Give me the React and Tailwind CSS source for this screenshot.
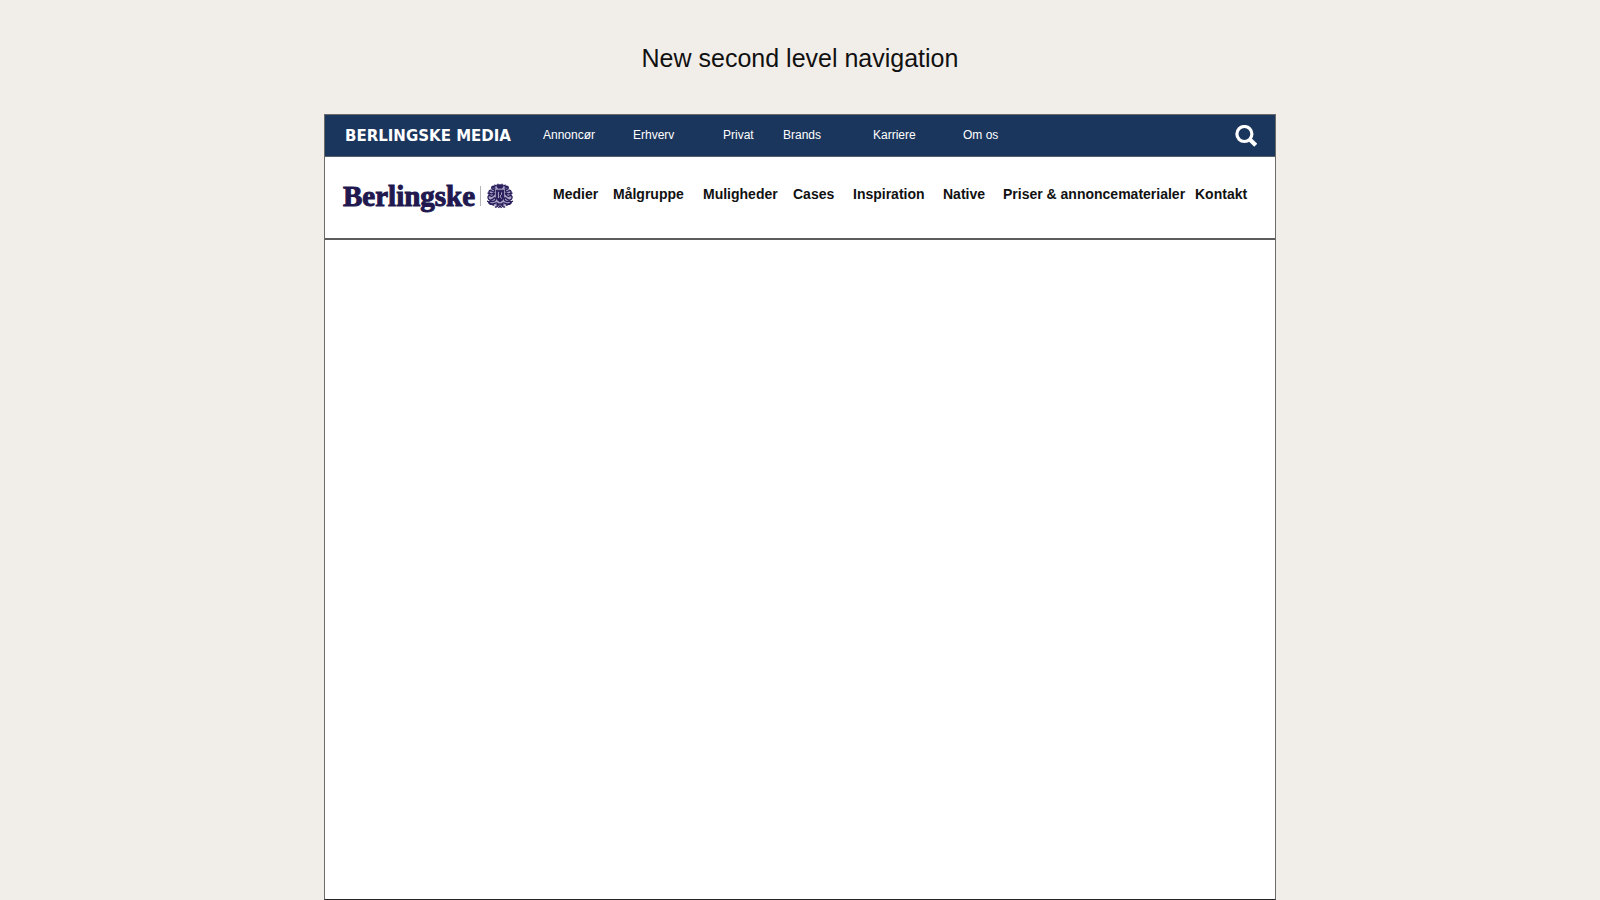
const topLinks = [
  { label: 'Annoncør', width: 'w-[90px]' },
  { label: 'Erhverv', width: 'w-[90px]' },
  { label: 'Privat', width: 'w-[60px]' },
  { label: 'Brands', width: 'w-[90px]' },
  { label: 'Karriere', width: 'w-[90px]' },
  { label: 'Om os', width: 'w-[90px]' },
];

const sectionLinks = [
  { label: 'Medier', width: 'w-[60px]' },
  { label: 'Målgruppe', width: 'w-[90px]' },
  { label: 'Muligheder', width: 'w-[90px]' },
  { label: 'Cases', width: 'w-[60px]' },
  { label: 'Inspiration', width: 'w-[90px]' },
  { label: 'Native', width: 'w-[60px]' },
  { label: 'Priser & annoncematerialer', width: 'w-48' },
  { label: 'Kontakt', width: 'w-[60px]' },
];

function SearchIcon() {
  return (
    <svg className="h-[22px] w-[22px]" viewBox="0 0 22 22" fill="none" stroke="#fff" aria-hidden="true">
      <circle cx="9.4" cy="9" r="7.500" strokeWidth="3.2" />
      <path d="M14.600 14.200 20.700 20.200" strokeWidth="4.200" />
    </svg>
  );
}

function Crest() {
  return (
    <svg className="h-[26px] w-7" viewBox="0 0 27 25" fill="none" stroke="#2a1f5c" aria-hidden="true">
      <ellipse cx="13.5" cy="12" rx="11.5" ry="10.5" fill="#aaa5c5" stroke="none" />
      <path d="M10.5 3c-1-2 1.200-2.500 3-1.200 1.800-1.300 4-.8 3 1.200l-1 2h-4z" fill="#2a1f5c" strokeWidth=".6" />
      <path d="M10 7h7v7c0 2-2 3-3.500 4-1.500-1-3.500-2-3.500-4z" fill="#2a1f5c" strokeWidth="1" />
      <path d="M12 8.500v6M15 9v2l-1.500 1.500L15 15" stroke="#c9c5dd" strokeWidth=".8" />
      <path
        d="M9 4C6.500 2 4.500 4 6 5.500S9 6 8 8 4 5.500 3 8s2.500 3 4.500 2-1 4-3 2.500S1 13.500 2.500 15.500s4 .5 5.500-1 2 2 0 3-4-.8-5 .7 1.500 3 4 2 3.500-2 4.500-.2-1 3.500-3 3"
        strokeWidth="1.300"
      />
      <path
        d="M18 4c2.500-2 4.500 0 3 1.500S18 6 19 8s4-2.500 5 0-2.500 3-4.500 2 1 4 3 2.500 3.500 1 2 3-4 .5-5.500-1-2 2 0 3 4-.8 5 .7-1.500 3-4 2-3.500-2-4.500-.2 1 3.500 3 3"
        strokeWidth="1.300"
      />
      <path d="M1 17.500c2 .5 4 3.500 7 4M26 17.500c-2 .5-4 3.500-7 4M10 21.500c2-1.500 5-1.500 7 0M12 24l1.500-2 1.500 2" strokeWidth="1.300" />
      <path d="M6 3.500l3 2M21 3.500l-3 2M1.500 9.500l2.500 1.500M25.500 9.500l-2.500 1.500M8 1.800l2 1M19 1.800l-2 1" strokeWidth="1.200" />
    </svg>
  );
}

export default function App() {
  return (
    <div className="flex min-h-screen flex-col items-center bg-[#f1eee9] font-['Liberation_Sans',Arial,sans-serif]">
      <h1 className="pt-10 pb-[38px] text-[25px] leading-9 text-[#111]">New second level navigation</h1>
      <div className="flex w-full max-w-[952px] grow flex-col border border-[#6b6c6a] border-b-[#222] bg-white">
        <header>
          <div className="flex h-[42px] items-center border-b border-[#55606b] bg-[#1b365d] pr-[18px] pl-5 text-white">
            <a
              href="#"
              className="w-[198px] shrink-0 font-['DejaVu_Sans',sans-serif] text-[15px] leading-5 font-bold whitespace-nowrap"
            >
              BERLINGSKE MEDIA
            </a>
            <nav aria-label="Berlingske Media" className="flex grow pb-px text-[12px] leading-4">
              {topLinks.map(({ label, width }) => (
                <a key={label} href="#" className={`${width} shrink-0 whitespace-nowrap`}>
                  {label}
                </a>
              ))}
            </nav>
            <button type="button" aria-label="Søg">
              <SearchIcon />
            </button>
          </div>
          <div className="flex h-[83px] border-b-2 border-[#5c5c5c] pt-[19px] pl-[18px]">
            <a href="#" className="flex h-10 w-[210px] shrink-0 items-center gap-[5px] text-[#21184f]">
              <span className="font-['Liberation_Serif',serif] text-[29px] leading-10 font-bold [-webkit-text-stroke:1px_#21184f]">
                Berlingske
              </span>
              <span className="h-5 w-px bg-[#b5b5b5]" />
              <Crest />
            </a>
            <nav aria-label="Berlingske" className="flex pt-2 text-[14px] leading-5 font-bold text-[#111]">
              {sectionLinks.map(({ label, width }) => (
                <a key={label} href="#" className={`${width} shrink-0 whitespace-nowrap`}>
                  {label}
                </a>
              ))}
            </nav>
          </div>
        </header>
        <main className="grow" />
      </div>
    </div>
  );
}
